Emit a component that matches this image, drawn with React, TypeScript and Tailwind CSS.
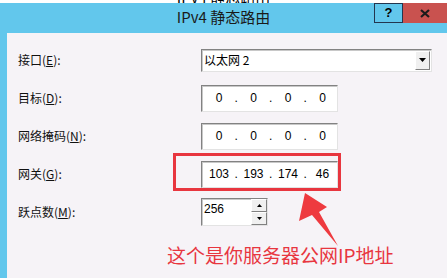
const cjk = { fontFamily: '"Noto Sans CJK SC", "Liberation Sans", sans-serif' };
const sans = { fontFamily: '"Liberation Sans", "Noto Sans CJK SC", sans-serif' };

const sunken =
  'bg-white border border-t-[#828282] border-l-[#828282] border-r-[#e3e3e3] border-b-[#e3e3e3] shadow-[inset_1px_1px_0_#c8c8c8]';

function Label({ text, k, tail }: { text: string; k: string; tail?: string }) {
  return (
    <div className="text-[12px] text-[#111] leading-none" style={cjk}>
      {text}(<span className="underline">{k}</span>){tail ?? ':'}
    </div>
  );
}

function IpBox({ parts }: { parts: string[] }) {
  return (
    <div className={`${sunken} w-[137px] h-[27px] flex items-center pl-[3px] text-[12px] text-black`} style={sans}>
      {parts.map((p, i) => (
        <div key={i} className="flex items-center">
          {i > 0 && <span className="w-[6.5px] text-center">.</span>}
          <span className="w-[28px] text-center">{p}</span>
        </div>
      ))}
    </div>
  );
}

export default function App() {
  return (
    <div className="relative w-[447px] h-[278px] overflow-hidden bg-[#62c7ec] flex flex-col">
      <div className="h-[3px] bg-white overflow-hidden flex justify-center">
        <span className="text-[15px] leading-none text-black -mt-[11px]" style={cjk}>
          IPv4 静态路由
        </span>
      </div>

      <div className="h-[30px] flex">
        <div className="flex-1" />
        <div className="pt-[6px] text-[15px] leading-none text-[#1a1a1a]" style={cjk}>
          IPv4 静态路由
        </div>
        <div className="flex-1 flex justify-end items-start">
          <div className="w-[29px] h-[20px] border border-[#23364f] flex items-center justify-center text-[13px] font-bold text-black" style={sans}>
            ?
          </div>
          <div className="w-[44px] h-[20px] bg-[#c9524f] flex items-center justify-center">
            <svg width="10" height="9" viewBox="0 0 10 9">
              <path d="M1 1 L9 8 M9 1 L1 8" stroke="#1b1b1b" strokeWidth="2.2" />
            </svg>
          </div>
        </div>
      </div>

      <div className="flex-1 flex">
        <div className="w-[7px]" />
        <div className="flex-1 bg-[#f6f3f7] pt-[8px] pl-[11px]">
          <div className="grid grid-cols-[183px_1fr] auto-rows-[38px] items-center">
            <Label text="接口" k="E" />
            <div className={`${sunken} w-[231px] h-[23px] flex items-center`}>
              <span className="flex-1 pl-[2px] text-[12px] text-black" style={cjk}>
                以太网 2
              </span>
              <div className="w-[15px] h-[19px] mr-[1px] bg-[#f0f0f0] border border-t-[#fff] border-l-[#fff] border-r-[#808080] border-b-[#808080] flex items-center justify-center">
                <svg width="7" height="4" viewBox="0 0 7 4">
                  <path d="M0 0 H7 L3.5 4 Z" fill="#000" />
                </svg>
              </div>
            </div>

            <Label text="目标" k="D" />
            <IpBox parts={['0', '0', '0', '0']} />

            <Label text="网络掩码" k="N" />
            <IpBox parts={['0', '0', '0', '0']} />

            <Label text="网关" k="G" />
            <IpBox parts={['103', '193', '174', '46']} />

            <Label text="跃点数" k="M" />
            <div className={`${sunken} w-[67px] h-[28px] flex`}>
              <span className="flex-1 pl-[2px] pt-[4px] text-[12px] text-black leading-none" style={sans}>
                256
              </span>
              <div className="w-[16px] flex flex-col">
                <div className="flex-1 bg-[#f0f0f0] border border-t-[#fff] border-l-[#fff] border-r-[#808080] border-b-[#808080] flex items-center justify-center">
                  <svg width="5" height="3" viewBox="0 0 5 3">
                    <path d="M0 3 H5 L2.5 0 Z" fill="#000" />
                  </svg>
                </div>
                <div className="flex-1 bg-[#f0f0f0] border border-t-[#fff] border-l-[#fff] border-r-[#808080] border-b-[#808080] flex items-center justify-center">
                  <svg width="5" height="3" viewBox="0 0 5 3">
                    <path d="M0 0 H5 L2.5 3 Z" fill="#000" />
                  </svg>
                </div>
              </div>
            </div>
          </div>
        </div>
      </div>

      {/* annotations */}
      <div className="absolute left-[173px] top-[153px] w-[168px] h-[38px] border-[3px] border-[#e8363f]" />
      <svg className="absolute left-0 top-0" width="447" height="278" viewBox="0 0 447 278">
        <polygon points="305,193 327,207 319,212 338,246 312,215 299,221" fill="#ee3a3f" />
      </svg>
      <div className="absolute left-[167px] top-[245px] text-[19px] leading-none text-[#e8363f]" style={cjk}>
        这个是你服务器公网IP地址
      </div>
    </div>
  );
}
